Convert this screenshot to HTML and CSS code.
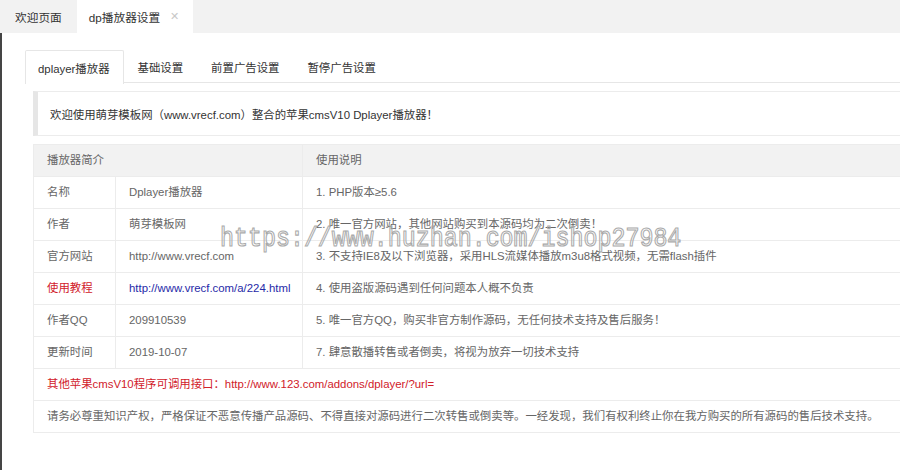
FILE: index.html
```html
<!DOCTYPE html>
<html lang="zh-CN">
<head>
<meta charset="utf-8">
<title>dp播放器设置</title>
<link rel="stylesheet" href="styles.css">
</head>
<body>
<div class="topbar">
  <div class="ttab">欢迎页面</div>
  <div class="ttab active">dp播放器设置<span class="close">✕</span></div>
</div>
<div class="main">
  <ul class="subtabs">
    <li class="on">dplayer播放器</li>
    <li>基础设置</li>
    <li>前置广告设置</li>
    <li>暂停广告设置</li>
  </ul>
  <div class="content">
    <div class="quote">欢迎使用萌芽模板网（www.vrecf.com）整合的苹果cmsV10 Dplayer播放器！</div>
    <table class="info">
      <colgroup><col class="c1"><col class="c2"><col class="c3"></colgroup>
      <tr class="head"><td colspan="2">播放器简介</td><td>使用说明</td></tr>
      <tr><td>名称</td><td>Dplayer播放器</td><td>1. PHP版本≥5.6</td></tr>
      <tr><td>作者</td><td>萌芽模板网</td><td>2. 唯一官方网站，其他网站购买到本源码均为二次倒卖！</td></tr>
      <tr><td>官方网站</td><td>http://www.vrecf.com</td><td>3. 不支持IE8及以下浏览器，采用HLS流媒体播放m3u8格式视频，无需flash插件</td></tr>
      <tr><td class="red">使用教程</td><td class="blue">http://www.vrecf.com/a/224.html</td><td>4. 使用盗版源码遇到任何问题本人概不负责</td></tr>
      <tr><td>作者QQ</td><td>209910539</td><td>5. 唯一官方QQ，购买非官方制作源码，无任何技术支持及售后服务！</td></tr>
      <tr><td>更新时间</td><td>2019-10-07</td><td>7. 肆意散播转售或者倒卖，将视为放弃一切技术支持</td></tr>
      <tr><td colspan="3" class="red">其他苹果cmsV10程序可调用接口：http://www.123.com/addons/dplayer/?url=</td></tr>
      <tr><td colspan="3">请务必尊重知识产权，严格保证不恶意传播产品源码、不得直接对源码进行二次转售或倒卖等。一经发现，我们有权利终止你在我方购买的所有源码的售后技术支持。</td></tr>
    </table>
  </div>
  <div class="watermark">https://www.huzhan.com/ishop27984</div>
</div>
</body>
</html>
```
FILE: styles.css
```css
html, body {
  margin: 0;
  padding: 0;
  overflow: hidden;
  background: #fff;
}
body {
  font-family: "Liberation Sans", "Noto Sans CJK SC", sans-serif;
  font-size: 11.4px;
  color: #333;
  width: 900px;
  height: 470px;
}
.topbar {
  display: flex;
  height: 33px;
  background: #f2f2f2;
  font-size: 11.7px;
}
.ttab {
  display: flex;
  align-items: center;
  padding: 0 15px;
  color: #333;
}
.ttab.active {
  background: #fff;
  padding: 0 14px 0 12px;
}
.close {
  margin-left: 10px;
  font-size: 11px;
  color: #c8c8c8;
}
.main {
  position: relative;
  border-left: 2px solid #454545;
  height: 437px;
  padding: 17px 0 0 23px;
  box-sizing: border-box;
}
.subtabs {
  display: flex;
  list-style: none;
  margin: 0 -20px 0 0;
  padding: 0;
  height: 32px;
  border-bottom: 1px solid #e6e6e6;
}
.subtabs li {
  display: flex;
  align-items: center;
  padding: 0 13px 0 12px;
  height: 32px;
  border: 1px solid transparent;
  border-bottom: none;
  color: #333;
}
.subtabs li + li {
  padding: 0 13px;
}
.subtabs li.on {
  border-color: #e6e6e6;
  background: #fff;
  height: 33px;
  border-radius: 2px 2px 0 0;
}
.content {
  padding: 8px 0 0 8px;
  margin-right: -20px;
}
.quote {
  border: 1px solid #ececec;
  border-left: 5px solid #e6e6e6;
  height: 43px;
  display: flex;
  align-items: center;
  padding-left: 12px;
  color: #333;
}
.info {
  margin-top: 8px;
  width: 100%;
  border-collapse: collapse;
  table-layout: fixed;
  color: #666;
}
.info col.c1 { width: 82px; }
.info col.c2 { width: 187px; }
.info td {
  border: 1px solid #ececec;
  padding: 6px 13px;
  line-height: 19px;
  white-space: nowrap;
  overflow: visible;
}
.info tr.head td {
  background: #f2f2f2;
}
.info td.red { color: #d1202a; }
.info td.blue { color: #1f2aa8; }
.watermark {
  position: absolute;
  left: 218px;
  top: 193px;
  font-family: "Liberation Mono", "DejaVu Sans Mono", monospace;
  font-size: 23.3px;
  line-height: 30px;
  color: transparent;
  -webkit-text-stroke: 1px #aaaaaa;
  transform: scaleY(1.15);
  transform-origin: left bottom;
  pointer-events: none;
  white-space: nowrap;
}
```
